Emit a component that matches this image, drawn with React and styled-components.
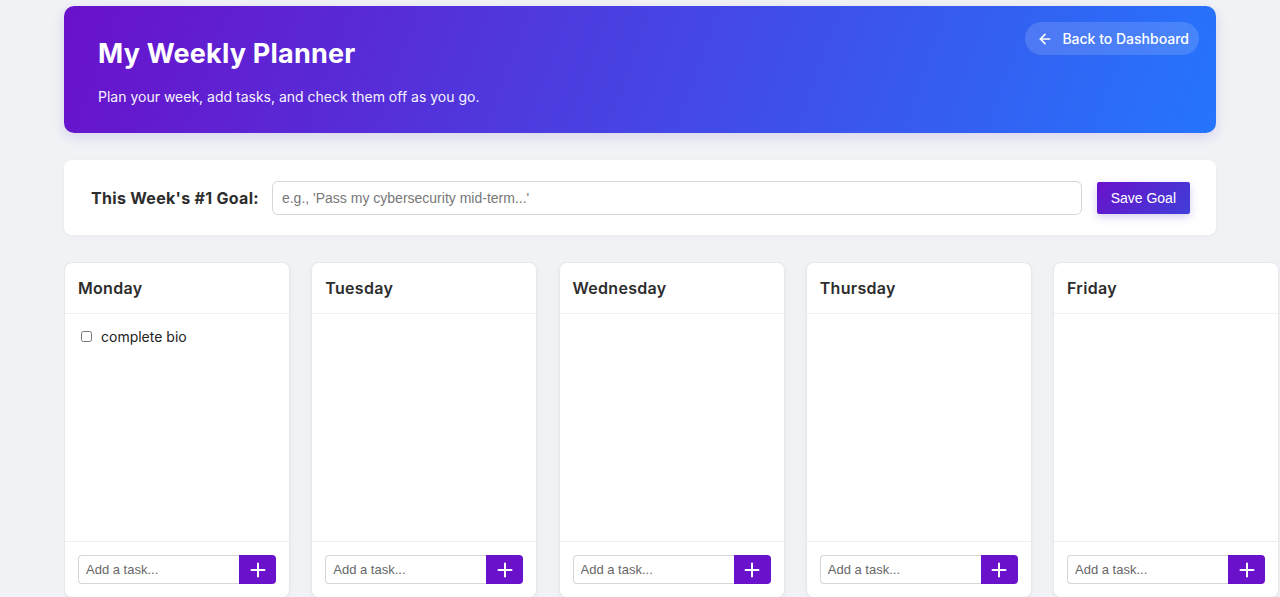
import React from "react";
import styled, { createGlobalStyle } from "styled-components";

const GlobalStyle = createGlobalStyle`
  body {
    margin: 0;
    background: #f0f2f5;
    font-family: "Inter", "Noto Sans", sans-serif;
    overflow: hidden;
  }
`;

const Page = styled.div`
  width: 90%;
  margin: 0 auto;
  padding-top: 6px;
`;

const Header = styled.header`
  display: flex;
  justify-content: space-between;
  align-items: flex-start;
  height: 127px;
  box-sizing: border-box;
  padding: 16px 17px 0 34px;
  border-radius: 10px;
  color: #fff;
  background: linear-gradient(110deg, #6a11cb 0%, #2575fc 100%);
  box-shadow: 0 4px 12px rgba(80, 40, 200, 0.15);
`;

const Title = styled.h1`
  margin: 15px 0 0;
  font-size: 27px;
  font-weight: 700;
  letter-spacing: 0.2px;
`;

const Subtitle = styled.p`
  margin: 18px 0 0;
  font-size: 14px;
  font-weight: 400;
  opacity: 0.95;
`;

const BackButton = styled.button`
  display: flex;
  align-items: center;
  gap: 9px;
  height: 33px;
  padding: 0 10px 0 12px;
  border: none;
  border-radius: 17px;
  background: rgba(255, 255, 255, 0.14);
  color: #fff;
  font-family: inherit;
  font-size: 14px;
  font-weight: 500;
  cursor: pointer;
`;

const GoalCard = styled.section`
  display: flex;
  align-items: center;
  gap: 13px;
  margin-top: 27px;
  height: 75px;
  box-sizing: border-box;
  padding: 0 26px 0 27px;
  background: #fff;
  border-radius: 8px;
  box-shadow: 0 1px 4px rgba(0, 0, 0, 0.04);
`;

const GoalLabel = styled.label`
  font-size: 16px;
  font-weight: 700;
  letter-spacing: 0.3px;
  color: #2d2d2d;
  white-space: nowrap;
`;

const GoalInput = styled.input`
  flex: 1;
  height: 34px;
  box-sizing: border-box;
  padding: 0 9px;
  border: 1px solid #d6d6d6;
  border-radius: 6px;
  font-family: "Liberation Sans", Arial, sans-serif;
  font-size: 14px;
  &::placeholder { color: #777; }
`;

const SaveButton = styled.button`
  margin-left: 2px;
  height: 32px;
  padding: 0 14px;
  border: none;
  border-radius: 2px;
  color: #fff;
  background: linear-gradient(135deg, #6a11cb, #3f3fd8);
  font-family: "Liberation Sans", Arial, sans-serif;
  font-size: 14px;
  box-shadow: 0 3px 8px rgba(80, 60, 200, 0.25);
`;

const Days = styled.div`
  display: flex;
  gap: 21.25px;
  margin-top: 27px;
  margin-right: -64px;
  overflow: hidden;
`;

const DayCard = styled.div`
  flex: 0 0 auto;
  width: 226px;
  min-width: 0;
  box-sizing: border-box;
  display: flex;
  flex-direction: column;
  height: 336px;
  background: #fff;
  border: 1px solid #e6e8ec;
  border-radius: 8px;
  box-shadow: 0 1px 4px rgba(0, 0, 0, 0.04);
`;

const DayTitle = styled.h3`
  margin: 0;
  padding: 0 13px;
  height: 50px;
  display: flex;
  align-items: center;
  font-size: 16px;
  font-weight: 600;
  letter-spacing: 0.3px;
  color: #2d2d2d;
  border-bottom: 1px solid #f0f0f0;
`;

const TaskList = styled.ul`
  flex: 1;
  margin: 0;
  padding: 14px 13px;
  list-style: none;
`;

const Task = styled.li`
  display: flex;
  align-items: center;
  gap: 9px;
  font-size: 14px;
  color: #222;
  input {
    margin: 0 0 0 3px;
    width: 11px;
    height: 11px;
  }
`;

const AddRow = styled.div`
  display: flex;
  padding: 13px 13px 0;
  height: 56px;
  box-sizing: border-box;
  border-top: 1px solid #eceef0;
`;

const TaskInput = styled.input`
  flex: 1;
  width: 0;
  min-width: 0;
  height: 29px;
  box-sizing: border-box;
  padding: 0 7px;
  border: 1px solid #d6d6d6;
  border-right: none;
  border-radius: 4px 0 0 4px;
  font-family: "Liberation Sans", Arial, sans-serif;
  font-size: 13px;
  &::placeholder { color: #666; }
`;

const AddButton = styled.button`
  flex: 0 0 37px;
  height: 29px;
  border: none;
  border-radius: 0 4px 4px 0;
  background: #6a11cb;
  color: #fff;
  display: flex;
  align-items: center;
  justify-content: center;
  padding: 0;
`;

const days = [
  { name: "Monday", tasks: ["complete bio"] },
  { name: "Tuesday", tasks: [] },
  { name: "Wednesday", tasks: [] },
  { name: "Thursday", tasks: [] },
  { name: "Friday", tasks: [] },
];

const App = () => {
  return <>
    <GlobalStyle/>
    <Page>
      <Header>
        <div>
          <Title>My Weekly Planner</Title>
          <Subtitle>Plan your week, add tasks, and check them off as you go.</Subtitle>
        </div>
        <BackButton>
          <svg width="16" height="16" viewBox="0 0 24 24" fill="none" stroke="currentColor" strokeWidth="2.4" strokeLinecap="round" strokeLinejoin="round">
            <path d="M19 12H5"/>
            <path d="M12 19l-7-7 7-7"/>
          </svg>
          Back to Dashboard
        </BackButton>
      </Header>
      <GoalCard>
        <GoalLabel>This Week's #1 Goal:</GoalLabel>
        <GoalInput placeholder="e.g., 'Pass my cybersecurity mid-term...'"/>
        <SaveButton>Save Goal</SaveButton>
      </GoalCard>
      <Days>
        {days.map(day => (
          <DayCard key={day.name}>
            <DayTitle>{day.name}</DayTitle>
            <TaskList>
              {day.tasks.map(t => (
                <Task key={t}><input type="checkbox"/>{t}</Task>
              ))}
            </TaskList>
            <AddRow>
              <TaskInput placeholder="Add a task..."/>
              <AddButton>
                <svg width="16" height="16" viewBox="0 0 16 16" stroke="currentColor" strokeWidth="2" strokeLinecap="round">
                  <path d="M8 1.5v13M1.5 8h13"/>
                </svg>
              </AddButton>
            </AddRow>
          </DayCard>
        ))}
      </Days>
    </Page>
  </>
};

export default App;
